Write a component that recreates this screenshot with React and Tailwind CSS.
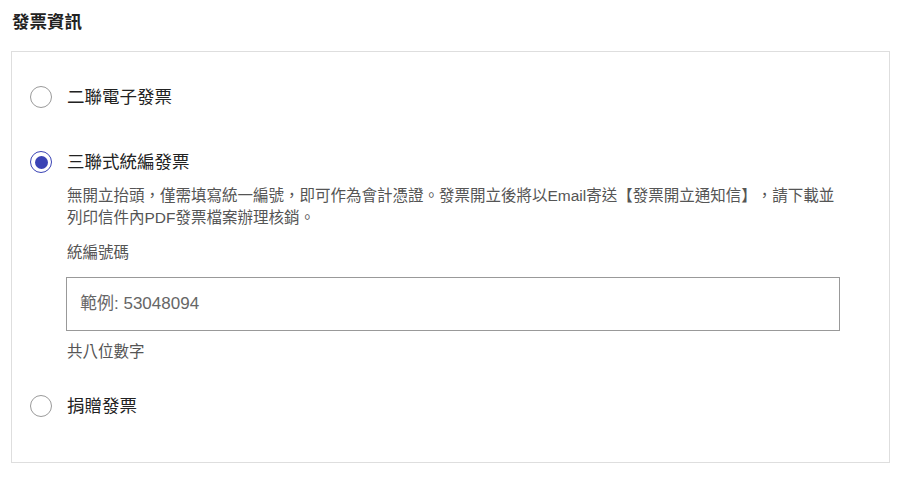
import { useState } from 'react'

const OPTIONS = [
  { id: 'duplicate', label: '二聯電子發票' },
  { id: 'triplicate', label: '三聯式統編發票' },
  { id: 'donate', label: '捐贈發票' },
]

function Radio({ checked }) {
  return (
    <span
      className={`flex h-[22px] w-[22px] shrink-0 items-center justify-center rounded-full border ${
        checked ? 'border-[#3a43b5]' : 'border-[#9a9a9a]'
      }`}
    >
      {checked && <span className="h-[13px] w-[13px] rounded-full bg-[#3a43b5]" />}
    </span>
  )
}

export default function App() {
  const [selected, setSelected] = useState('triplicate')
  const [taxId, setTaxId] = useState('')

  return (
    <div className="min-h-[479px] bg-white pl-[11px] pr-[12px] pt-[10px] font-['Liberation_Sans','Noto_Sans_CJK_TC',sans-serif] text-[#222] [text-spacing-trim:space-all]">
      <h2 className="pl-px text-[17.5px] font-bold leading-[24px]">發票資訊</h2>

      <div className="mt-[17px] border border-[#dedede] pb-[44px] pl-[18px] pt-[33px]">
        {OPTIONS.map((opt, i) => (
          <div key={opt.id} className={i === 0 ? '' : i === 1 ? 'mt-[41px]' : 'mt-[31px]'}>
            <label className="flex h-[24px] cursor-pointer items-center gap-[15px]" onClick={() => setSelected(opt.id)}>
              <Radio checked={selected === opt.id} />
              <span className="text-[17.5px] leading-[24px]">{opt.label}</span>
            </label>

            {opt.id === 'triplicate' && selected === 'triplicate' && (
              <div className="pl-[37px] pt-[11px] text-[15.5px] leading-[22px] text-[#555]">
                <p className="max-w-[782px]">
                  無開立抬頭，僅需填寫統一編號，即可作為會計憑證。發票開立後將以Email寄送【發票開立通知信】，請下載並列印信件內PDF發票檔案辦理核銷。
                </p>
                <p className="mt-[13px]">統編號碼</p>
                <input
                  value={taxId}
                  onChange={(e) => setTaxId(e.target.value)}
                  placeholder="範例: 53048094"
                  className="-ml-px mt-[13px] block h-[54px] w-[774px] border border-[#999] px-[13px] text-[17px] text-[#222] outline-none placeholder:text-[#666]"
                />
                <p className="mt-[10px]">共八位數字</p>
              </div>
            )}
          </div>
        ))}
      </div>
    </div>
  )
}
